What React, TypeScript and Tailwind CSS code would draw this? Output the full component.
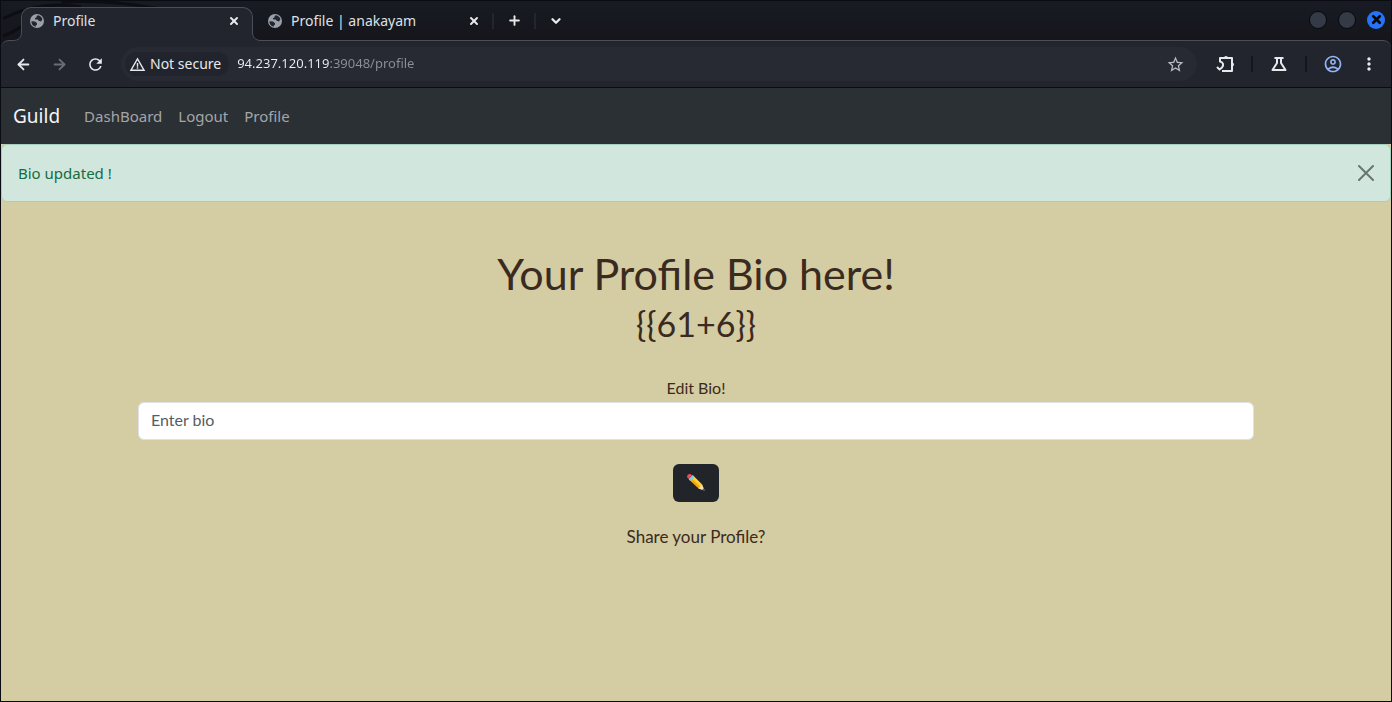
import type { ReactNode } from 'react';
import { useState } from 'react';
import { ArrowLeft, ArrowRight, ChevronDown, Plus, X } from 'lucide-react';
import { MdMoreVert, MdOutlineAccountCircle, MdRefresh, MdStarBorder, MdWarningAmber } from 'react-icons/md';

const navLinks = [
  { label: 'DashBoard', href: '#dashboard' },
  { label: 'Logout', href: '#logout' },
  { label: 'Profile', href: '#profile' },
];

function GlobeIcon() {
  return (
    <svg viewBox="0 0 16 16" className="h-4 w-4 shrink-0" aria-hidden="true">
      <circle cx="8" cy="8" r="7" fill="#9aa0a8" />
      <path
        d="M2.4 8.2 6 8.4 8 10.2v1.6l-1.2.4v1.6C4 13.2 2.3 11 2.4 8.2ZM9 2.3c2 .4 3.6 1.7 4.4 3.7l-1.2 2.4-2.6-.6-.8-1.2H6.4l-.6-1.4 1.8-1V2.9Z"
        fill="#22242e"
      />
    </svg>
  );
}

function ExtensionIcon() {
  return (
    <svg viewBox="0 0 20 20" className="h-5 w-5" fill="none" stroke="currentColor" strokeWidth="2" aria-hidden="true">
      <path d="M5 8V4h12v13H7" strokeLinejoin="round" />
      <path d="M9 4a2 2 0 0 1 4 0ZM17 8.500a2 2 0 0 1 0 4Z" fill="currentColor" stroke="none" />
      <path d="M4.500 7.500C8.500 8 9 11 7 13.500L4.500 15.500 2 13" />
    </svg>
  );
}

function FlaskIcon() {
  return (
    <svg viewBox="0 0 20 20" className="h-5 w-5" fill="none" stroke="currentColor" strokeWidth="2" aria-hidden="true">
      <path d="M5.500 4h9M8 4v5l-4.500 7h13L12 9V4" strokeLinejoin="round" />
    </svg>
  );
}

function IconButton({ label, children, className = '' }: { label: string; children: ReactNode; className?: string }) {
  return (
    <button type="button" aria-label={label} className={`flex h-5 w-5 shrink-0 items-center justify-center ${className}`}>
      {children}
    </button>
  );
}

function TabStrip() {
  return (
    <div className="relative flex h-[39px] items-end bg-linear-to-b from-[#181b24] to-[#15161b]">
      <svg viewBox="0 0 180 40" className="absolute top-0 left-0 h-[39px] w-[180px]" fill="none" stroke="#0d0e13" aria-hidden="true">
        <path d="M0 18C25 5 50 1 80 6M0 36C20 28 28 20 32 8M60 1c40-2 70 1 100 7" strokeWidth="3" />
      </svg>
      <div className="relative z-10 -mb-px ml-3 flex items-end">
        {/* flared corners where the tab meets the toolbar */}
        <svg viewBox="0 0 9 9" className="relative z-10 -mr-px h-[9px] w-[9px]" aria-hidden="true">
          <path d="M0 9V8.500C5.500 8.500 8.500 5.500 8.500 0H9v9Z" fill="#22242e" />
          <path d="M0 8.500C5.500 8.500 8.500 5.500 8.500 0" fill="none" stroke="#4c4e57" />
        </svg>
        <div className="flex h-[34px] w-[232px] items-center rounded-t-[10px] border-x border-t border-[#4c4e57] bg-[#22242e] pr-2 pb-2 pl-[7px]">
          <GlobeIcon />
          <span className="ml-2 flex-1 text-sm text-[#dfe0e3]">Profile</span>
          <IconButton label="Close tab">
            <X size={12} strokeWidth={4} />
          </IconButton>
        </div>
        <svg viewBox="0 0 9 9" className="relative z-10 -ml-px h-[9px] w-[9px]" aria-hidden="true">
          <path d="M9 9V8.500C3.500 8.500 0.500 5.500 0.500 0H0v9Z" fill="#22242e" />
          <path d="M9 8.500C3.500 8.500 0.500 5.500 0.500 0" fill="none" stroke="#4c4e57" />
        </svg>
      </div>
      <div className="flex h-full flex-1 items-center pl-1.5">
        <div className="flex w-[217px] items-center">
          <GlobeIcon />
          <span className="ml-2 flex-1 text-sm text-[#dfe0e3]">Profile | anakayam</span>
          <IconButton label="Close tab">
            <X size={12} strokeWidth={4} />
          </IconButton>
        </div>
        <span className="ml-2 h-4 w-0.5 bg-[#24262e]" />
        <IconButton label="New tab" className="ml-2.5">
          <Plus size={15} strokeWidth={3} />
        </IconButton>
        <span className="ml-2.5 h-4 w-0.5 bg-[#24262e]" />
        <IconButton label="Search tabs" className="ml-2.5">
          <ChevronDown size={14} strokeWidth={4} />
        </IconButton>
      </div>
      <div className="flex h-full items-center gap-[11px] pr-1.5 pb-0.5">
        <button type="button" aria-label="Minimize" className="h-[18px] w-[18px] rounded-full border border-[#08090d] bg-[#353a47]" />
        <button type="button" aria-label="Maximize" className="h-[18px] w-[18px] rounded-full border border-[#08090d] bg-[#353a47]" />
        <button type="button" aria-label="Close" className="flex h-[18px] w-[18px] items-center justify-center rounded-full bg-[#2673f8] text-[#08090d]">
          <X size={13} strokeWidth={5} />
        </button>
      </div>
    </div>
  );
}

function Toolbar() {
  return (
    <div className="bg-[#15161b]">
      <div className="flex h-12 items-center rounded-t-[8px] border-t border-b border-t-[#4c4e57] border-b-[#0b0c11] bg-[#22242e] px-3">
        <IconButton label="Back">
          <ArrowLeft size={17} strokeWidth={2.5} />
        </IconButton>
        <IconButton label="Forward" className="ml-4 text-[#6c6e76]">
          <ArrowRight size={17} strokeWidth={2.5} />
        </IconButton>
        <IconButton label="Reload" className="ml-4">
          <MdRefresh size={19} />
        </IconButton>
        <div className="ml-4 flex h-[34px] flex-1 items-center rounded-full bg-[#272933] pr-3 pl-1">
          <button type="button" className="flex h-6 items-center gap-1 rounded-full bg-[#22242d] pr-2 pl-1 text-sm text-[#e8e9eb]">
            <MdWarningAmber size={17} />
            Not secure
          </button>
          {/* the host part is brighter than the port and path */}
          <input
            aria-label="Address"
            defaultValue="94.237.120.119:39048/profile"
            className="ml-2 min-w-0 flex-1 bg-linear-to-r from-[#eeeff1] from-[92px] to-[#8d8f97] to-[92px] bg-clip-text text-[13px] text-transparent caret-white outline-none"
          />
          <IconButton label="Bookmark" className="text-[#b9bac0]">
            <MdStarBorder size={19} />
          </IconButton>
        </div>
        <IconButton label="Extensions" className="ml-[18px]">
          <ExtensionIcon />
        </IconButton>
        <span className="ml-4 h-4 w-0.5 bg-[#15161c]" />
        <IconButton label="Labs" className="ml-4">
          <FlaskIcon />
        </IconButton>
        <span className="ml-4 h-4 w-0.5 bg-[#15161c]" />
        <IconButton label="Account" className="ml-4 text-[#92b5f4]">
          <MdOutlineAccountCircle size={20} />
        </IconButton>
        <IconButton label="Menu" className="ml-4">
          <MdMoreVert size={20} />
        </IconButton>
      </div>
    </div>
  );
}

export default function App() {
  const [bio, setBio] = useState('');
  const [showAlert, setShowAlert] = useState(true);

  return (
    <div className="flex min-h-screen flex-col border border-[#0b0c11] bg-[#d4cca2] font-['Noto_Sans',sans-serif] text-[#e8e9eb]">
      <TabStrip />
      <Toolbar />

      <nav className="flex h-14 items-center bg-[#2b3035] px-3">
        <a href="#home" className="mr-6 text-[19px] text-[#f3f4f5]">Guild</a>
        <div className="flex gap-4">
          {navLinks.map((link) => (
            <a key={link.label} href={link.href} className="text-[15px] text-[#a4a6a8]">
              {link.label}
            </a>
          ))}
        </div>
      </nav>

      {showAlert && (
        <div role="alert" className="flex h-[58px] items-center justify-between rounded-md border border-[#a3cfbb] bg-[#d1e7dd] px-4 text-[15px] text-[#146c43]">
          Bio updated !
          <button type="button" aria-label="Close alert" onClick={() => setShowAlert(false)} className="text-[#697570]">
            <svg viewBox="0 0 16 16" className="h-4 w-4" fill="none" stroke="currentColor" strokeWidth="2" strokeLinecap="round" aria-hidden="true">
              <path d="m1 1 14 14M15 1 1 15" />
            </svg>
          </button>
        </div>
      )}

      <main className="mx-auto flex w-full flex-col items-center px-[137px] pt-12 font-['Lato',sans-serif] text-[#3b2a20]">
        <h1 className="text-[43px] leading-12">Your Profile Bio here!</h1>
        <h2 className="mt-1.5 text-[34px] leading-10">{'{{61+6}}'}</h2>
        <form className="mt-8 flex w-full flex-col items-center" onSubmit={(e) => e.preventDefault()}>
          <label htmlFor="bio" className="mb-0.5 text-base">Edit Bio!</label>
          <input
            id="bio"
            value={bio}
            onChange={(e) => setBio(e.target.value)}
            placeholder="Enter bio"
            className="h-[38px] w-full rounded-md border border-[#dee2e6] bg-white px-3 pb-1 text-base placeholder:text-[#595c5f]"
          />
          <button type="submit" aria-label="Save bio" className="mt-6 flex h-[38px] w-[46px] items-center justify-center rounded-md bg-[#212529]">
            <svg viewBox="0 0 20 20" className="h-5 w-5" aria-hidden="true">
              <path d="m3 6.500 4-4 9 9 2.500 6-6-2Z" fill="#f9a70b" />
              <path d="m5 4.500 2-2 9 9-2 2Z" fill="#ffd02e" />
              <path d="m2.500 6 4-4 2 2-4 4Z" fill="#7ccbe0" />
              <path d="M1.300 4.500C.5 2 2.500.5 4.800 1L6 2.200 2.500 5.700Z" fill="#ee4b5c" />
              <path d="m12.500 15.500 3.500-4 2.500 6Z" fill="#f5dfb0" />
              <path d="m16.300 16.800 1.500-1.500.7 2.200Z" fill="#4a4e55" />
            </svg>
          </button>
        </form>
        <a href="#share" className="mt-[22px] text-[17px]">Share your Profile?</a>
      </main>
    </div>
  );
}
